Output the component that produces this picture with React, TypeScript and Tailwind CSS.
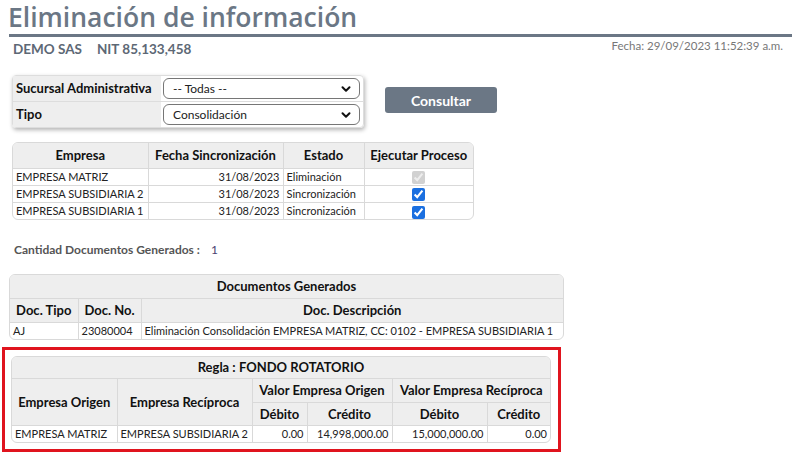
const font = { fontFamily: 'Lato, "Open Sans", sans-serif' };
const titleFont = { fontFamily: '"Open Sans", "Noto Sans", sans-serif' };

function Chevron() {
  return (
    <svg width="10" height="10" viewBox="0 0 10 10" className="absolute right-2 top-1/2 -translate-y-1/2">
      <path d="M1.5 3.2 L5 6.7 L8.5 3.2" fill="none" stroke="#111" strokeWidth="2" strokeLinecap="round" strokeLinejoin="round" />
    </svg>
  );
}

function FakeSelect({ value }: { value: string }) {
  return (
    <div className="relative h-[21px] w-[197px] rounded-[6px] border border-[#767676] bg-white pl-[9px] text-[12px] leading-[19px] text-[#222]">
      {value}
      <Chevron />
    </div>
  );
}

const th = "border border-[#d9d9d9] bg-[#eeeeee] font-bold text-[#111] whitespace-nowrap p-0";
const td = "border border-[#d9d9d9] px-[3px] py-0 text-[11px] text-[#222] leading-[16px] whitespace-nowrap overflow-hidden";

const empresas = [
  { name: "EMPRESA MATRIZ", fecha: "31/08/2023", estado: "Eliminación", disabled: true },
  { name: "EMPRESA SUBSIDIARIA 2", fecha: "31/08/2023", estado: "Sincronización", disabled: false },
  { name: "EMPRESA SUBSIDIARIA 1", fecha: "31/08/2023", estado: "Sincronización", disabled: false },
];

export default function App() {
  return (
    <div className="h-[455px] w-[792px] overflow-hidden bg-white" style={font}>
      <h1 className="pl-[8px] text-[26.5px] font-semibold leading-[34px] text-[#6b7785]" style={titleFont}>
        Eliminación de información
      </h1>
      <div className="ml-[9px] h-[3px] bg-[#6b7785]" />
      <div className="flex items-start justify-between pl-[13px] pr-[9px]">
        <div className="mt-[2px] text-[13.5px] font-bold text-[#5d6875]">
          DEMO SAS<span className="ml-[15px]">NIT 85,133,458</span>
        </div>
        <div className="text-[11.5px] text-[#777]">Fecha: 29/09/2023 11:52:39 a.m.</div>
      </div>

      <div className="mt-[16px] flex items-start pl-[12px]">
        <div className="w-[352px] rounded-[4px] border border-[#dddddd] shadow-[1px_2px_4px_rgba(0,0,0,0.3)]">
          <div className="flex h-[26px] border-b border-[#dddddd]">
            <div className="flex w-[148px] items-center bg-[#eeeeee] pl-[3px] text-[13px] font-bold text-[#111]">
              Sucursal Administrativa
            </div>
            <div className="flex flex-1 items-center pl-[2px]">
              <FakeSelect value="-- Todas --" />
            </div>
          </div>
          <div className="flex h-[25px]">
            <div className="flex w-[148px] items-center bg-[#eeeeee] pl-[3px] text-[13px] font-bold text-[#111]">
              Tipo
            </div>
            <div className="flex flex-1 items-center pl-[2px]">
              <FakeSelect value="Consolidación" />
            </div>
          </div>
        </div>
        <button className="ml-[21px] mt-[12px] h-[26px] w-[112px] rounded-[3px] bg-[#6b7785] text-[14px] font-bold text-white">
          Consultar
        </button>
      </div>

      <div className="ml-[12px] mt-[14px] w-[462px] overflow-hidden rounded-[6px] border border-[#d9d9d9]">
        <table className="w-full table-fixed border-collapse border-hidden">
          <colgroup>
            <col className="w-[135px]" />
            <col className="w-[135px]" />
            <col className="w-[81px]" />
            <col />
          </colgroup>
          <thead>
            <tr className="h-[25px] text-[13px]">
              <th className={th}>Empresa</th>
              <th className={th}>Fecha Sincronización</th>
              <th className={th}>Estado</th>
              <th className={th}>Ejecutar Proceso</th>
            </tr>
          </thead>
          <tbody>
            {empresas.map((e) => (
              <tr key={e.name} className="h-[17px]">
                <td className={td}>{e.name}</td>
                <td className={`${td} text-right`}>{e.fecha}</td>
                <td className={td}>{e.estado}</td>
                <td className={`${td} text-center`}>
                  <input
                    type="checkbox"
                    checked
                    readOnly
                    disabled={e.disabled}
                    className="m-0 h-[13px] w-[13px] align-middle accent-[#1a6fe0]"
                  />
                </td>
              </tr>
            ))}
          </tbody>
        </table>
      </div>

      <div className="ml-[14px] mt-[21px] text-[12px] font-bold text-[#555]">
        Cantidad Documentos Generados :<span className="ml-[11px] font-normal text-[#4b3f72]">1</span>
      </div>

      <div className="ml-[9px] mt-[15px] w-[555px] overflow-hidden rounded-[6px] border border-[#d9d9d9]">
        <table className="w-full table-fixed border-collapse border-hidden">
          <colgroup>
            <col className="w-[68px]" />
            <col className="w-[63px]" />
            <col />
          </colgroup>
          <thead>
            <tr className="h-[23px] text-[13px]">
              <th colSpan={3} className={th}>Documentos Generados</th>
            </tr>
            <tr className="h-[24px] text-[13px]">
              <th className={th}>Doc. Tipo</th>
              <th className={th}>Doc. No.</th>
              <th className={th}>Doc. Descripción</th>
            </tr>
          </thead>
          <tbody>
            <tr className="h-[16px]">
              <td className={td}>AJ</td>
              <td className={td}>23080004</td>
              <td className={td}>Eliminación Consolidación EMPRESA MATRIZ, CC: 0102 - EMPRESA SUBSIDIARIA 1</td>
            </tr>
          </tbody>
        </table>
      </div>

      <div className="ml-[2px] mt-[7px] w-[559px] border-[3px] border-[#e0141e] pb-[6px] pl-[6px] pt-[6px]">
        <div className="w-[540px] overflow-hidden rounded-[6px] border border-[#d9d9d9]">
          <table className="w-full table-fixed border-collapse border-hidden">
            <colgroup>
              <col className="w-[105px]" />
              <col className="w-[135px]" />
              <col className="w-[55px]" />
              <col className="w-[85px]" />
              <col className="w-[95px]" />
              <col />
            </colgroup>
            <thead>
              <tr className="h-[22px] text-[13px]">
                <th colSpan={6} className={th}>Regla : FONDO ROTATORIO</th>
              </tr>
              <tr className="h-[24px] text-[13px]">
                <th rowSpan={2} className={th}>Empresa Origen</th>
                <th rowSpan={2} className={th}>Empresa Recíproca</th>
                <th colSpan={2} className={th}>Valor Empresa Origen</th>
                <th colSpan={2} className={th}>Valor Empresa Recíproca</th>
              </tr>
              <tr className="h-[23px] text-[13px]">
                <th className={th}>Débito</th>
                <th className={th}>Crédito</th>
                <th className={th}>Débito</th>
                <th className={th}>Crédito</th>
              </tr>
            </thead>
            <tbody>
              <tr className="h-[16px]">
                <td className={td}>EMPRESA MATRIZ</td>
                <td className={td}>EMPRESA SUBSIDIARIA 2</td>
                <td className={`${td} text-right`}>0.00</td>
                <td className={`${td} text-right`}>14,998,000.00</td>
                <td className={`${td} text-right`}>15,000,000.00</td>
                <td className={`${td} text-right`}>0.00</td>
              </tr>
            </tbody>
          </table>
        </div>
      </div>
    </div>
  );
}
